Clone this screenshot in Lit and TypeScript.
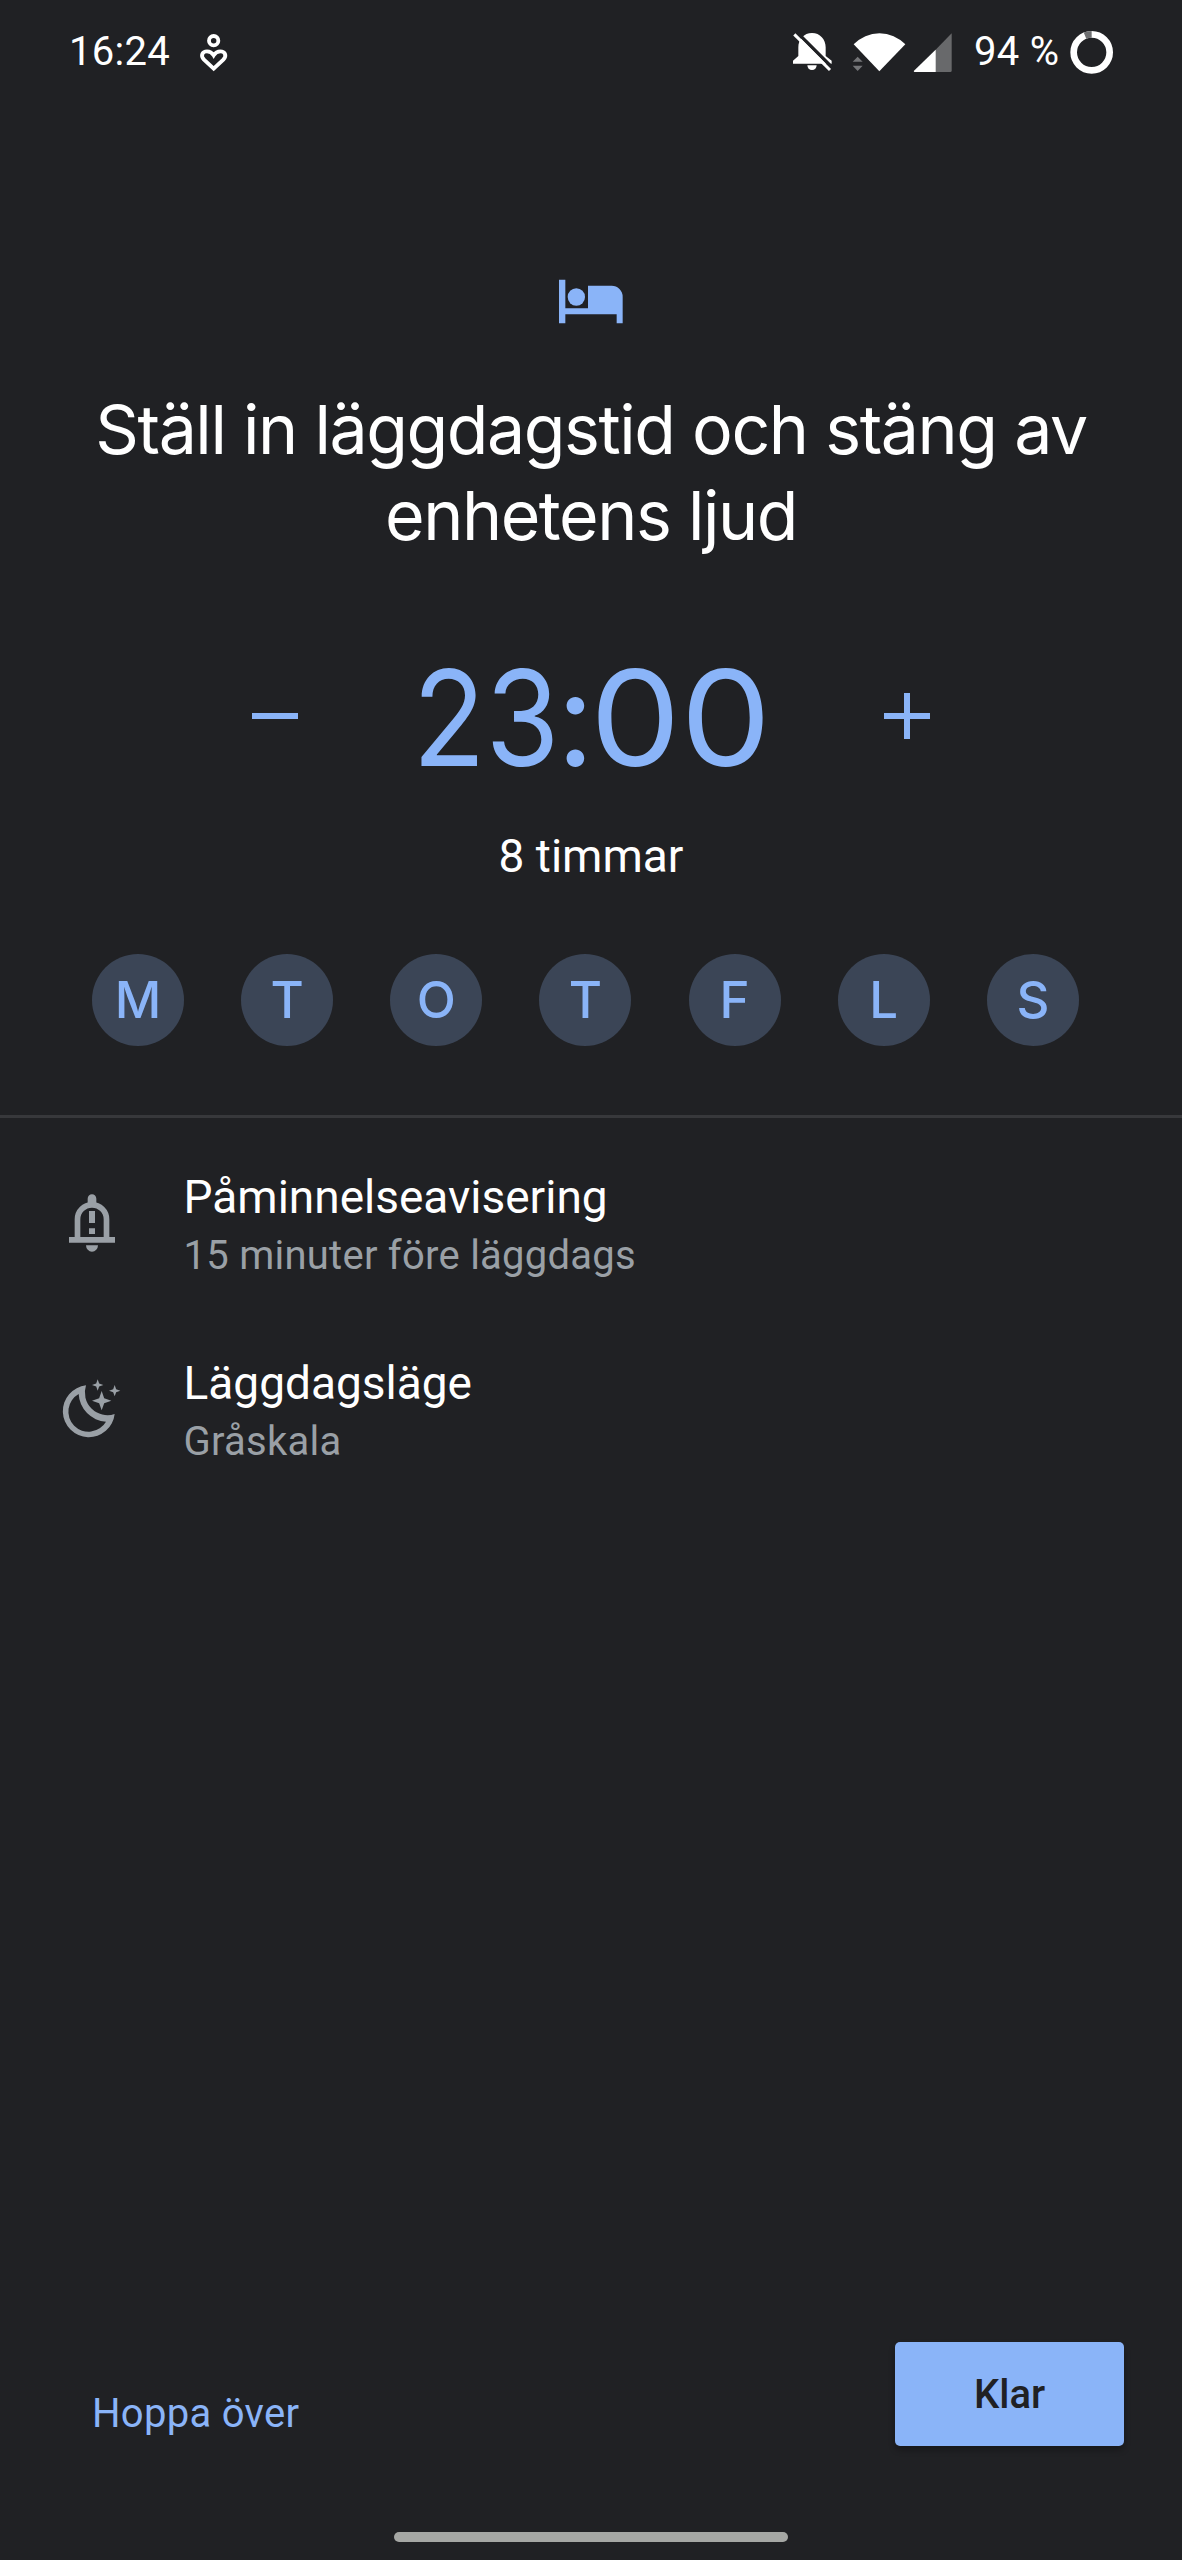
import { LitElement, html, css, svg } from "lit";
import { customElement, state } from "lit/decorators.js";

const star = (cx: number, cy: number, r: number) => {
  const k = r * 0.26;
  return svg`<path d="M${cx} ${cy - r}L${cx + k} ${cy - k}L${cx + r} ${cy}L${cx + k} ${cy + k}L${cx} ${cy + r}L${cx - k} ${cy + k}L${cx - r} ${cy}L${cx - k} ${cy - k}Z"/>`;
};

const wellbeingIcon = html`<svg width="50" height="70" viewBox="420 0 150 210" fill="none" stroke="#fff" stroke-width="11.500">
  <circle cx="491" cy="62" r="14" />
  <path d="M491 146L462 119C450 106 458 94 471 94C481 94 486 98 491 106C496 98 501 94 511 94C524 94 532 106 520 119Z" />
</svg>`;

const signalIcons = html`<svg width="180" height="70" viewBox="0 0 540 210" fill="#fff">
  <path d="M39 131V122L55 108V82C55 58 72 39 96 39C120 39 137 58 137 82V108L155 122V131Z" />
  <path d="M82 136H110A14 14 0 0 1 82 136Z" />
  <path d="M49 35L161 147" stroke="#202124" stroke-width="10" />
  <path d="M43 43L150 150" stroke="#fff" stroke-width="9" />
  <path d="M221 73A107 107 0 0 1 376 73L298 154Z" />
  <path d="M233 110L248 125H218ZM218 137H248L233 153Z" fill="#747578" />
  <path d="M402 156L515 40V152Q515 156 511 156Z" fill="#68696b" />
  <path d="M467 89V156H404Q400 156 402 152Z" />
</svg>`;

const batteryIcon = html`<svg width="60" height="70" viewBox="840 0 180 210" fill="none" stroke-width="20">
  <circle cx="935" cy="97" r="54" stroke="#fff" />
  <path d="M915 47A54 54 0 0 1 935 43" stroke="#6e6f71" />
</svg>`;

const bedIcon = html`<svg class="bed" width="100" height="80" viewBox="0 0 300 240" fill="#8ab4f8">
  <path d="M57 59H76V145H144V77H215A33 33 0 0 1 248 110V190H230V163H76V190H57Z" />
  <circle cx="109" cy="111" r="26" />
</svg>`;

const bellIcon = html`<svg width="90" height="90" viewBox="0 0 270 270" fill="#9aa0a6">
  <path d="M82.500 176V118A43.500 43.500 0 0 1 169.500 118V176" fill="none" stroke="#9aa0a6" stroke-width="17" />
  <path d="M57 171H195V188H57ZM113 70V56A13 13 0 0 1 139 56V70ZM117 93H135V129H117ZM117 145H135V162H117ZM108 196H144A18 19 0 0 1 108 196Z" />
</svg>`;

const moonIcon = html`<svg width="90" height="90" viewBox="0 0 270 270" fill="#9aa0a6">
  <path fill-rule="evenodd" d="M108 61A78 78 0 1 0 194 147A68 68 0 0 1 108 61ZM86 87A60.500 60.500 0 1 0 168 170A87 87 0 0 1 86 87Z" />
  ${star(155, 107, 29)} ${star(143, 60, 17)} ${star(194, 77, 17)}
</svg>`;

@customElement("app-root")
export class AppRoot extends LitElement {
  @state() private hour = 23;

  private days = ["M", "T", "O", "T", "F", "L", "S"];

  private options = [
    { icon: bellIcon, name: "Påminnelseavisering", detail: "15 minuter före läggdags" },
    { icon: moonIcon, name: "Läggdagsläge", detail: "Gråskala" },
  ];

  static styles = css`
    :host {
      display: flex;
      flex-direction: column;
      box-sizing: border-box;
      width: 1182px;
      height: 2560px;
      background: #202124;
      color: #fff;
      font-family: Roboto, sans-serif;
      font-size: 40px;
      overflow: hidden;
    }
    svg { display: block; flex: none; }
    button {
      border: 0;
      padding: 0;
      background: none;
      color: #8ab4f8;
      font: inherit;
      display: block;
    }
    .status {
      display: flex;
      height: 70px;
      padding: 20px 62px 0 69px;
      line-height: 64.6px;
      letter-spacing: 0.3px;
      white-space: pre;
    }
    .clock { width: 121px; }
    .right { display: flex; margin-left: auto; }
    .percent { width: 86px; padding-left: 14px; }
    .bed { margin: 170px 0 0 540px; }
    h1 {
      margin: 46px 0 0;
      font: 400 68px/86px Inter, sans-serif;
      letter-spacing: -1.45px;
      text-align: center;
      white-space: pre;
    }
    .picker {
      display: flex;
      align-items: center;
      justify-content: space-between;
      height: 134px;
      margin-top: 91px;
      padding: 0 252px;
    }
    .time {
      display: flex;
      padding-top: 3px;
      font: 400 133px/134px Inter, sans-serif;
      font-feature-settings: "calt" 0;
      color: #8ab4f8;
      white-space: nowrap;
    }
    .time span { display: flex; justify-content: center; }
    .hours { width: 134px; transform: scaleX(0.9); }
    .colon { width: 45px; }
    .minutes { width: 165px; transform: scaleX(1.08); }
    .duration {
      margin-top: 46px;
      font-size: 46px;
      line-height: 54px;
      text-align: center;
    }
    .days {
      display: flex;
      justify-content: space-between;
      margin-top: 71px;
      padding: 0 103px 0 92px;
    }
    .day {
      width: 92px;
      height: 92px;
      border-radius: 50%;
      background: #3b4556;
      font: 500 51px/92px Inter, sans-serif;
      text-align: center;
    }
    .divider { height: 3px; margin-top: 69px; background: #37383b; }
    .options { padding: 16px 50px 0; }
    .option { display: flex; height: 186px; }
    .option svg { margin-top: 46px; }
    .option:last-child svg { margin-top: 45px; }
    .copy { padding: 35px 0 0 43.500px; }
    .name { font-size: 46px; line-height: 56px; }
    .detail { line-height: 62px; letter-spacing: 0.25px; color: #9aa0a6; }
    .actions {
      display: flex;
      justify-content: space-between;
      margin-top: auto;
      padding: 0 58px 0 92px;
    }
    .skip { line-height: 60px; padding-top: 39px; letter-spacing: 0.3px; }
    .done {
      width: 229px;
      height: 104px;
      border-radius: 5px;
      background: #8ab4f8;
      color: #202124;
      font-weight: 500;
      line-height: 106px;
      box-shadow: 0 4px 6px rgba(0, 0, 0, 0.3);
    }
    .handle {
      width: 394px;
      height: 10px;
      margin: 86px auto 18px;
      border-radius: 5px;
      background: #a5a7a4;
    }
  `;

  private step(delta: number) {
    this.hour = (this.hour + delta + 24) % 24;
  }

  render() {
    return html`
      <div class="status">
        <span class="clock">16:24</span>${wellbeingIcon}
        <div class="right">${signalIcons}<span class="percent">94 %</span>${batteryIcon}</div>
      </div>
      ${bedIcon}
      <h1><span>Ställ in läggdagstid och stäng av</span><br /><span>enhetens ljud</span></h1>
      <div class="picker">
        <button @click=${() => this.step(-1)}>
          <svg width="46" height="46" viewBox="0 0 46 46" fill="#8ab4f8"><path d="M0 20H46V26H0Z" /></svg>
        </button>
        <div class="time">
          <span class="hours">${String(this.hour).padStart(2, "0")}</span><span class="colon">:</span><span class="minutes">00</span>
        </div>
        <button @click=${() => this.step(1)}>
          <svg width="46" height="46" viewBox="0 0 46 46" fill="#8ab4f8"><path d="M0 20H20V0H26V20H46V26H26V46H20V26H0Z" /></svg>
        </button>
      </div>
      <div class="duration">8 timmar</div>
      <div class="days">${this.days.map((d) => html`<button class="day">${d}</button>`)}</div>
      <div class="divider"></div>
      <div class="options">
        ${this.options.map(
          (o) => html`<div class="option">
            ${o.icon}
            <div class="copy">
              <div class="name">${o.name}</div>
              <div class="detail">${o.detail}</div>
            </div>
          </div>`
        )}
      </div>
      <div class="actions">
        <button class="skip">Hoppa över</button>
        <button class="done">Klar</button>
      </div>
      <div class="handle"></div>
    `;
  }
}
